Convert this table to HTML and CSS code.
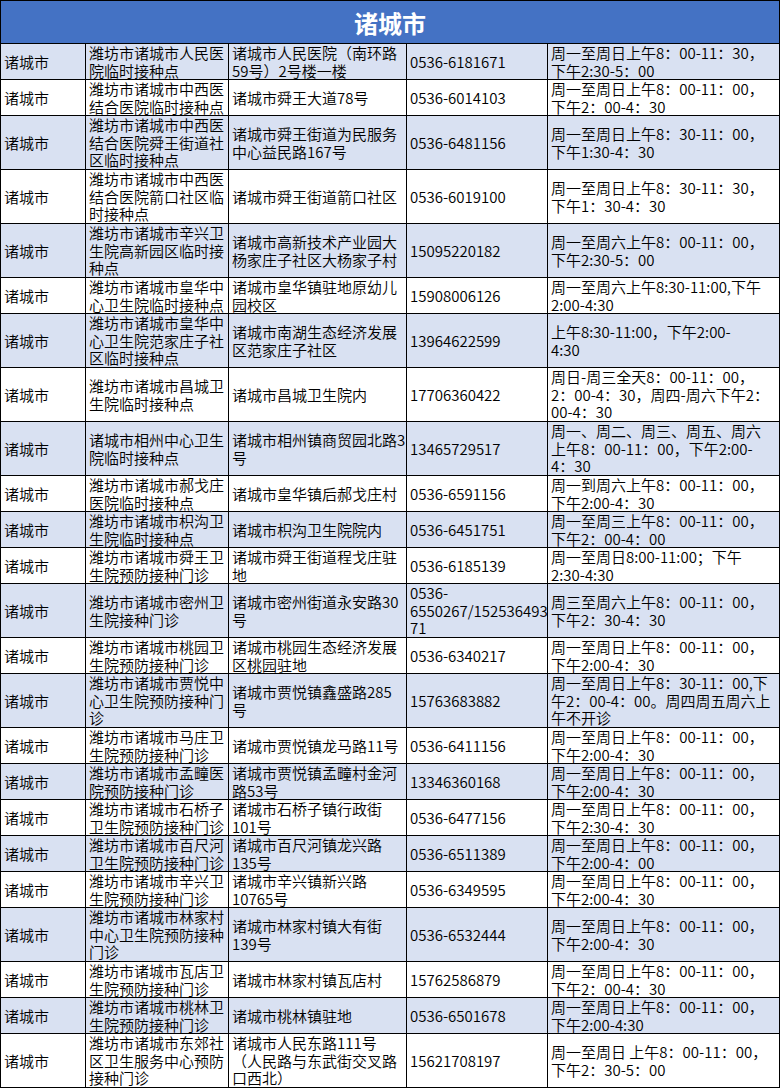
FILE: index.html
```html
<!DOCTYPE html>
<html lang="zh-CN">
<head>
<meta charset="utf-8">
<title>诸城市</title>
<link rel="stylesheet" href="styles.css">
</head>
<body>
<div class="sheet">
  <div class="title">诸城市</div>

  <div class="row alt">
    <div class="cell"><span>诸城市</span></div>
    <div class="cell"><span>潍坊市诸城市人民医<br>院临时接种点</span></div>
    <div class="cell"><span>诸城市人民医院（南环路<br>59号）2号楼一楼</span></div>
    <div class="cell"><span>0536-6181671</span></div>
    <div class="cell"><span>周一至周日上午8：00-11：30，<br>下午2:30-5：00</span></div>
  </div>

  <div class="row">
    <div class="cell"><span>诸城市</span></div>
    <div class="cell"><span>潍坊市诸城市中西医<br>结合医院临时接种点</span></div>
    <div class="cell"><span>诸城市舜王大道78号</span></div>
    <div class="cell"><span>0536-6014103</span></div>
    <div class="cell"><span>周一至周日上午8：00-11：00，<br>下午2：00-4：30</span></div>
  </div>

  <div class="row tall alt">
    <div class="cell"><span>诸城市</span></div>
    <div class="cell"><span>潍坊市诸城市中西医<br>结合医院舜王街道社<br>区临时接种点</span></div>
    <div class="cell"><span>诸城市舜王街道为民服务<br>中心益民路167号</span></div>
    <div class="cell"><span>0536-6481156</span></div>
    <div class="cell"><span>周一至周日上午8：30-11：00，<br>下午1:30-4：30</span></div>
  </div>

  <div class="row tall">
    <div class="cell"><span>诸城市</span></div>
    <div class="cell"><span>潍坊市诸城市中西医<br>结合医院箭口社区临<br>时接种点</span></div>
    <div class="cell"><span>诸城市舜王街道箭口社区</span></div>
    <div class="cell"><span>0536-6019100</span></div>
    <div class="cell"><span>周一至周日上午8：30-11：30，<br>下午1：30-4：30</span></div>
  </div>

  <div class="row tall alt">
    <div class="cell"><span>诸城市</span></div>
    <div class="cell"><span>潍坊市诸城市辛兴卫<br>生院高新园区临时接<br>种点</span></div>
    <div class="cell"><span>诸城市高新技术产业园大<br>杨家庄子社区大杨家子村</span></div>
    <div class="cell"><span>15095220182</span></div>
    <div class="cell"><span>周一至周六上午8：00-11：00，<br>下午2:30-5：00</span></div>
  </div>

  <div class="row">
    <div class="cell"><span>诸城市</span></div>
    <div class="cell"><span>潍坊市诸城市皇华中<br>心卫生院临时接种点</span></div>
    <div class="cell"><span>诸城市皇华镇驻地原幼儿<br>园校区</span></div>
    <div class="cell"><span>15908006126</span></div>
    <div class="cell"><span>周一至周六上午8:30-11:00,下午<br>2:00-4:30</span></div>
  </div>

  <div class="row tall alt">
    <div class="cell"><span>诸城市</span></div>
    <div class="cell"><span>潍坊市诸城市皇华中<br>心卫生院范家庄子社<br>区临时接种点</span></div>
    <div class="cell"><span>诸城市南湖生态经济发展<br>区范家庄子社区</span></div>
    <div class="cell"><span>13964622599</span></div>
    <div class="cell"><span>上午8:30-11:00，下午2:00-<br>4:30</span></div>
  </div>

  <div class="row tall">
    <div class="cell"><span>诸城市</span></div>
    <div class="cell"><span>潍坊市诸城市昌城卫<br>生院临时接种点</span></div>
    <div class="cell"><span>诸城市昌城卫生院内</span></div>
    <div class="cell"><span>17706360422</span></div>
    <div class="cell"><span>周日-周三全天8：00-11：00，<br>2：00-4：30，周四-周六下午2：<br>00-4：30</span></div>
  </div>

  <div class="row tall alt">
    <div class="cell"><span>诸城市</span></div>
    <div class="cell"><span>诸城市相州中心卫生<br>院临时接种点</span></div>
    <div class="cell"><span>诸城市相州镇商贸园北路3<br>号</span></div>
    <div class="cell"><span>13465729517</span></div>
    <div class="cell"><span>周一、周二、周三、周五、周六<br>上午8：00-11：00，下午2:00-<br>4：30</span></div>
  </div>

  <div class="row">
    <div class="cell"><span>诸城市</span></div>
    <div class="cell"><span>潍坊市诸城市郝戈庄<br>医院临时接种点</span></div>
    <div class="cell"><span>诸城市皇华镇后郝戈庄村</span></div>
    <div class="cell"><span>0536-6591156</span></div>
    <div class="cell"><span>周一到周六上午8：00-11：00，<br>下午2:00-4：30</span></div>
  </div>

  <div class="row alt">
    <div class="cell"><span>诸城市</span></div>
    <div class="cell"><span>潍坊市诸城市枳沟卫<br>生院临时接种点</span></div>
    <div class="cell"><span>诸城市枳沟卫生院院内</span></div>
    <div class="cell"><span>0536-6451751</span></div>
    <div class="cell"><span>周一至周三上午8：00-11：00，<br>下午2：00-4：00</span></div>
  </div>

  <div class="row">
    <div class="cell"><span>诸城市</span></div>
    <div class="cell"><span>潍坊市诸城市舜王卫<br>生院预防接种门诊</span></div>
    <div class="cell"><span>诸城市舜王街道程戈庄驻<br>地</span></div>
    <div class="cell"><span>0536-6185139</span></div>
    <div class="cell"><span>周一至周日8:00-11:00；下午<br>2:30-4:30</span></div>
  </div>

  <div class="row tall alt">
    <div class="cell"><span>诸城市</span></div>
    <div class="cell"><span>潍坊市诸城市密州卫<br>生院接种门诊</span></div>
    <div class="cell"><span>诸城市密州街道永安路30<br>号</span></div>
    <div class="cell"><span>0536-<br>6550267/152536493<br>71</span></div>
    <div class="cell"><span>周三至周六上午8：00-11：00，<br>下午2：30-4：30</span></div>
  </div>

  <div class="row">
    <div class="cell"><span>诸城市</span></div>
    <div class="cell"><span>潍坊市诸城市桃园卫<br>生院预防接种门诊</span></div>
    <div class="cell"><span>诸城市桃园生态经济发展<br>区桃园驻地</span></div>
    <div class="cell"><span>0536-6340217</span></div>
    <div class="cell"><span>周一至周日上午8：00-11：00，<br>下午2:00-4：30</span></div>
  </div>

  <div class="row tall alt">
    <div class="cell"><span>诸城市</span></div>
    <div class="cell"><span>潍坊市诸城市贾悦中<br>心卫生院预防接种门<br>诊</span></div>
    <div class="cell"><span>诸城市贾悦镇鑫盛路285<br>号</span></div>
    <div class="cell"><span>15763683882</span></div>
    <div class="cell"><span>周一至周日上午8：30-11：00,下<br>午2：00-4：00。周四周五周六上<br>午不开诊</span></div>
  </div>

  <div class="row">
    <div class="cell"><span>诸城市</span></div>
    <div class="cell"><span>潍坊市诸城市马庄卫<br>生院预防接种门诊</span></div>
    <div class="cell"><span>诸城市贾悦镇龙马路11号</span></div>
    <div class="cell"><span>0536-6411156</span></div>
    <div class="cell"><span>周一至周日上午8：00-11：00，<br>下午2:00-4：30</span></div>
  </div>

  <div class="row alt">
    <div class="cell"><span>诸城市</span></div>
    <div class="cell"><span>潍坊市诸城市孟疃医<br>院预防接种门诊</span></div>
    <div class="cell"><span>诸城市贾悦镇孟疃村金河<br>路53号</span></div>
    <div class="cell"><span>13346360168</span></div>
    <div class="cell"><span>周一至周日上午8：00-11：00，<br>下午2:00-4：30</span></div>
  </div>

  <div class="row">
    <div class="cell"><span>诸城市</span></div>
    <div class="cell"><span>潍坊市诸城市石桥子<br>卫生院预防接种门诊</span></div>
    <div class="cell"><span>诸城市石桥子镇行政街<br>101号</span></div>
    <div class="cell"><span>0536-6477156</span></div>
    <div class="cell"><span>周一至周日上午8：00-11：00，<br>下午2:30-4：30</span></div>
  </div>

  <div class="row alt">
    <div class="cell"><span>诸城市</span></div>
    <div class="cell"><span>潍坊市诸城市百尺河<br>卫生院预防接种门诊</span></div>
    <div class="cell"><span>诸城市百尺河镇龙兴路<br>135号</span></div>
    <div class="cell"><span>0536-6511389</span></div>
    <div class="cell"><span>周一至周日上午8：00-11：00，<br>下午2:00-4：00</span></div>
  </div>

  <div class="row">
    <div class="cell"><span>诸城市</span></div>
    <div class="cell"><span>潍坊市诸城市辛兴卫<br>生院预防接种门诊</span></div>
    <div class="cell"><span>诸城市辛兴镇新兴路<br>10765号</span></div>
    <div class="cell"><span>0536-6349595</span></div>
    <div class="cell"><span>周一至周日上午8：00-11：00，<br>下午2:00-4：30</span></div>
  </div>

  <div class="row tall alt">
    <div class="cell"><span>诸城市</span></div>
    <div class="cell"><span>潍坊市诸城市林家村<br>中心卫生院预防接种<br>门诊</span></div>
    <div class="cell"><span>诸城市林家村镇大有街<br>139号</span></div>
    <div class="cell"><span>0536-6532444</span></div>
    <div class="cell"><span>周一至周日上午8：00-11：00，<br>下午2:00-4：30</span></div>
  </div>

  <div class="row">
    <div class="cell"><span>诸城市</span></div>
    <div class="cell"><span>潍坊市诸城市瓦店卫<br>生院预防接种门诊</span></div>
    <div class="cell"><span>诸城市林家村镇瓦店村</span></div>
    <div class="cell"><span>15762586879</span></div>
    <div class="cell"><span>周一至周日上午8：00-11：00，<br>下午2：00-4：30</span></div>
  </div>

  <div class="row alt">
    <div class="cell"><span>诸城市</span></div>
    <div class="cell"><span>潍坊市诸城市桃林卫<br>生院预防接种门诊</span></div>
    <div class="cell"><span>诸城市桃林镇驻地</span></div>
    <div class="cell"><span>0536-6501678</span></div>
    <div class="cell"><span>周一至周日上午8：00-11：00，<br>下午2:00-4:30</span></div>
  </div>

  <div class="row tall">
    <div class="cell"><span>诸城市</span></div>
    <div class="cell"><span>潍坊市诸城市东郊社<br>区卫生服务中心预防<br>接种门诊</span></div>
    <div class="cell"><span>诸城市人民东路111号<br>（人民路与东武街交叉路<br>口西北）</span></div>
    <div class="cell"><span>15621708197</span></div>
    <div class="cell"><span>周一至周日 上午8：00-11：00，<br>下午2：30-5：00</span></div>
  </div>
</div>
</body>
</html>
```

FILE: styles.css
```css
* {
  box-sizing: border-box;
}

body {
  margin: 0;
  background: #ffffff;
  font-family: "Noto Sans CJK SC", "Liberation Sans", sans-serif;
  color: #000000;
}

.sheet {
  width: 780px;
  border: 1px solid #000000;
  border-bottom: none;
}

.title {
  height: 43px;
  background: #4472c4;
  color: #ffffff;
  font-size: 24px;
  font-weight: bold;
  display: flex;
  align-items: center;
  justify-content: center;
  border-bottom: 1px solid #000000;
}

.row {
  display: grid;
  grid-template-columns: 85px 143px 178px 141px 231px;
  height: 36px;
  border-bottom: 1px solid #000000;
  font-size: 15px;
  line-height: 17.5px;
  font-weight: 350;
  background: #ffffff;
}

.row.tall {
  height: 54px;
}

.row.alt {
  background: #d9e1f2;
}

.cell {
  display: flex;
  align-items: center;
  padding: 0 2px 0 3px;
  border-right: 1px solid #000000;
  white-space: nowrap;
}

.cell:last-child {
  border-right: none;
}
```
